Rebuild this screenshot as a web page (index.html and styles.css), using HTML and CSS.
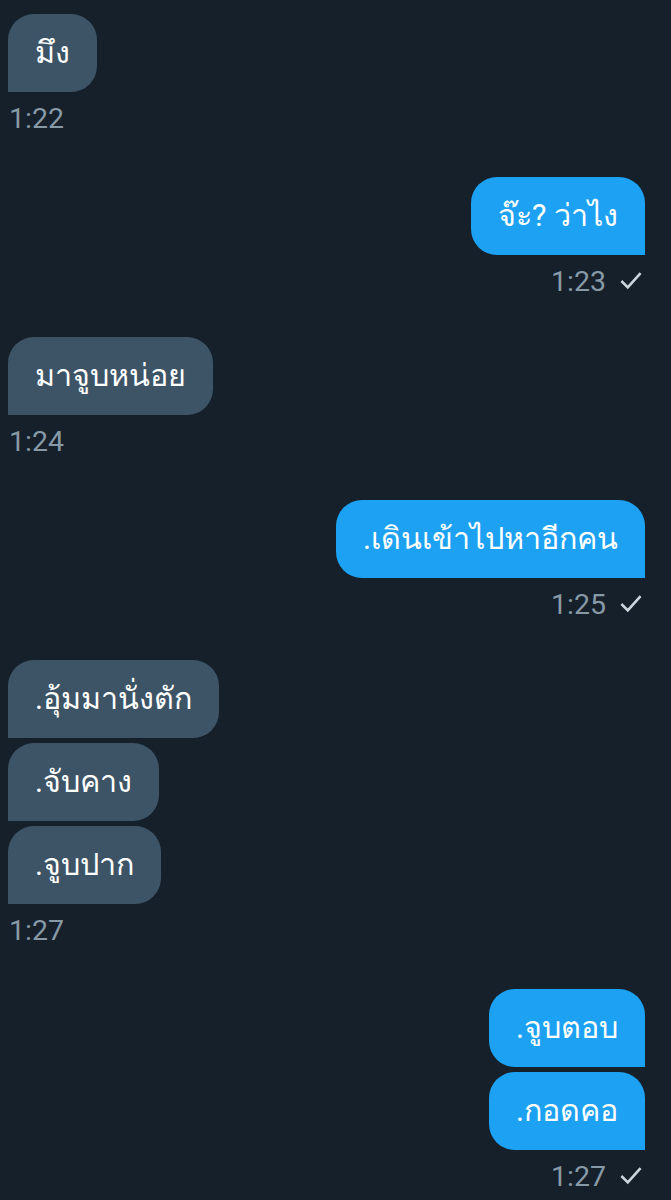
FILE: index.html
```html
<!DOCTYPE html>
<html lang="th">
<head>
<meta charset="utf-8">
<link rel="stylesheet" href="styles.css">
</head>
<body>
<div class="chat">
  <div class="group in">
    <div class="bubble">มึง</div>
    <div class="meta"><span class="time">1:22</span></div>
  </div>
  <div class="group out">
    <div class="bubble">จ๊ะ? ว่าไง</div>
    <div class="meta"><span class="time">1:23</span><svg class="check" viewBox="0 0 24 24"><path d="M2.5 13l6 6L21.5 4.5"/></svg></div>
  </div>
  <div class="group in">
    <div class="bubble">มาจูบหน่อย</div>
    <div class="meta"><span class="time">1:24</span></div>
  </div>
  <div class="group out">
    <div class="bubble">.เดินเข้าไปหาอีกคน</div>
    <div class="meta"><span class="time">1:25</span><svg class="check" viewBox="0 0 24 24"><path d="M2.5 13l6 6L21.5 4.5"/></svg></div>
  </div>
  <div class="group in">
    <div class="bubble">.อุ้มมานั่งตัก</div>
    <div class="bubble">.จับคาง</div>
    <div class="bubble">.จูบปาก</div>
    <div class="meta"><span class="time">1:27</span></div>
  </div>
  <div class="group out">
    <div class="bubble">.จูบตอบ</div>
    <div class="bubble">.กอดคอ</div>
    <div class="meta"><span class="time">1:27</span><svg class="check" viewBox="0 0 24 24"><path d="M2.5 13l6 6L21.5 4.5"/></svg></div>
  </div>
</div>
</body>
</html>
```
FILE: styles.css
```css
html, body {
  margin: 0;
  padding: 0;
  background: #15202b;
}
body {
  font-family: Roboto, "Noto Sans", "DejaVu Sans", sans-serif;
  color: #ffffff;
}
.chat {
  display: flex;
  flex-direction: column;
  padding: 14px 26px 0 8px;
}
.group {
  display: flex;
  flex-direction: column;
  gap: 5px;
}
.group.in {
  align-items: flex-start;
  margin-bottom: 43px;
}
.group.out {
  align-items: flex-end;
  margin-bottom: 40px;
}
.bubble {
  height: 78px;
  box-sizing: border-box;
  display: flex;
  align-items: center;
  padding: 0 27px;
  font-size: 30.5px;
  line-height: 78px;
  border-radius: 26px;
  white-space: nowrap;
}
.in .bubble {
  background: #3d5466;
  border-bottom-left-radius: 0;
}
.out .bubble {
  background: #1da1f2;
  border-bottom-right-radius: 0;
}
.meta {
  display: flex;
  align-items: center;
  gap: 14px;
  height: 32px;
  margin-top: 5px;
  font-size: 28.5px;
  color: #8899a6;
}
.in .meta { margin-left: 1px; }
.out .meta { margin-right: 3px; }
.check {
  width: 22px;
  height: 22px;
  fill: none;
  stroke: #ccd6dd;
  stroke-width: 2.8;
  stroke-linecap: square;
}
```
